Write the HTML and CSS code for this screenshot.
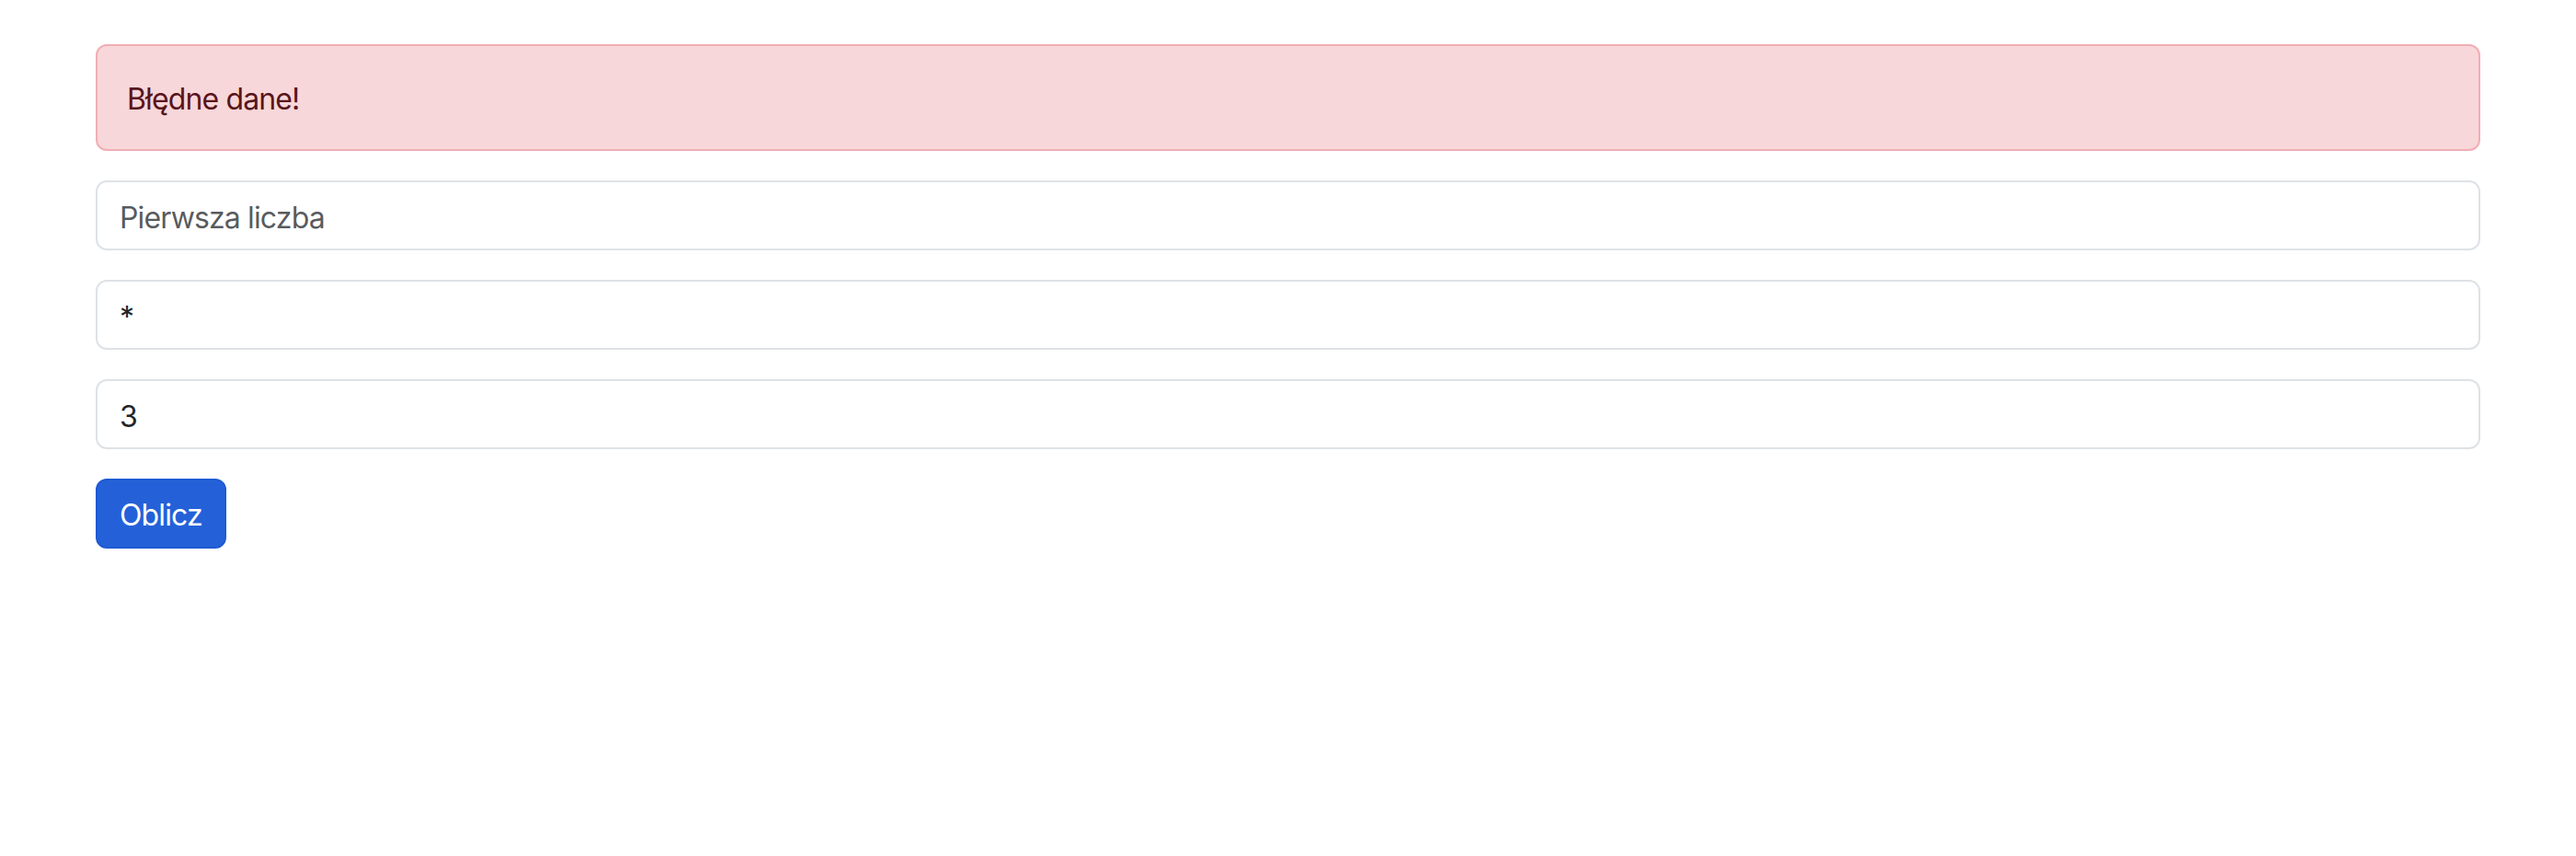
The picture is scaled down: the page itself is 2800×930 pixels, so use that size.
FILE: index.html
```html
<!DOCTYPE html>
<html lang="pl">
<head>
<meta charset="utf-8">
<title>Kalkulator</title>
<link rel="stylesheet" href="styles.css">
</head>
<body>
<main class="page">
  <div class="alert">Błędne dane!</div>
  <form class="calc">
    <input class="field" type="text" placeholder="Pierwsza liczba">
    <input class="field" type="text" value="*">
    <input class="field" type="text" value="3">
    <div><button class="btn" type="button">Oblicz</button></div>
  </form>
</main>
</body>
</html>
```
FILE: styles.css
```css
html, body {
  margin: 0;
  background: #ffffff;
}
body {
  font-family: Inter, "Noto Sans", "Liberation Sans", sans-serif;
  font-size: 32px;
  line-height: 1.5;
  letter-spacing: -0.027em;
  color: #212529;
}
.page {
  padding: 48px 104px;
}
.alert {
  background: #f8d7da;
  border: 2px solid #f1aeb5;
  border-radius: 12px;
  color: #58151c;
  padding: 34px 32px 30px;
  line-height: 48px;
  margin-bottom: 32px;
}
.calc {
  display: flex;
  flex-direction: column;
  gap: 32px;
}
.field {
  display: block;
  box-sizing: border-box;
  width: 100%;
  height: 76px;
  margin: 0;
  padding: 14px 24px 10px;
  font: inherit;
  letter-spacing: inherit;
  line-height: 48px;
  color: #212529;
  background: #fff;
  border: 2px solid #dee2e6;
  border-radius: 12px;
  outline: none;
}
.field::placeholder {
  color: rgba(33, 37, 41, 0.75);
}
.btn {
  box-sizing: border-box;
  height: 76px;
  padding: 14px 24px 10px;
  font: inherit;
  letter-spacing: inherit;
  line-height: 48px;
  color: #fff;
  background: #2461d8;
  border: 2px solid #1f5ad3;
  border-radius: 12px;
  cursor: pointer;
}
```
